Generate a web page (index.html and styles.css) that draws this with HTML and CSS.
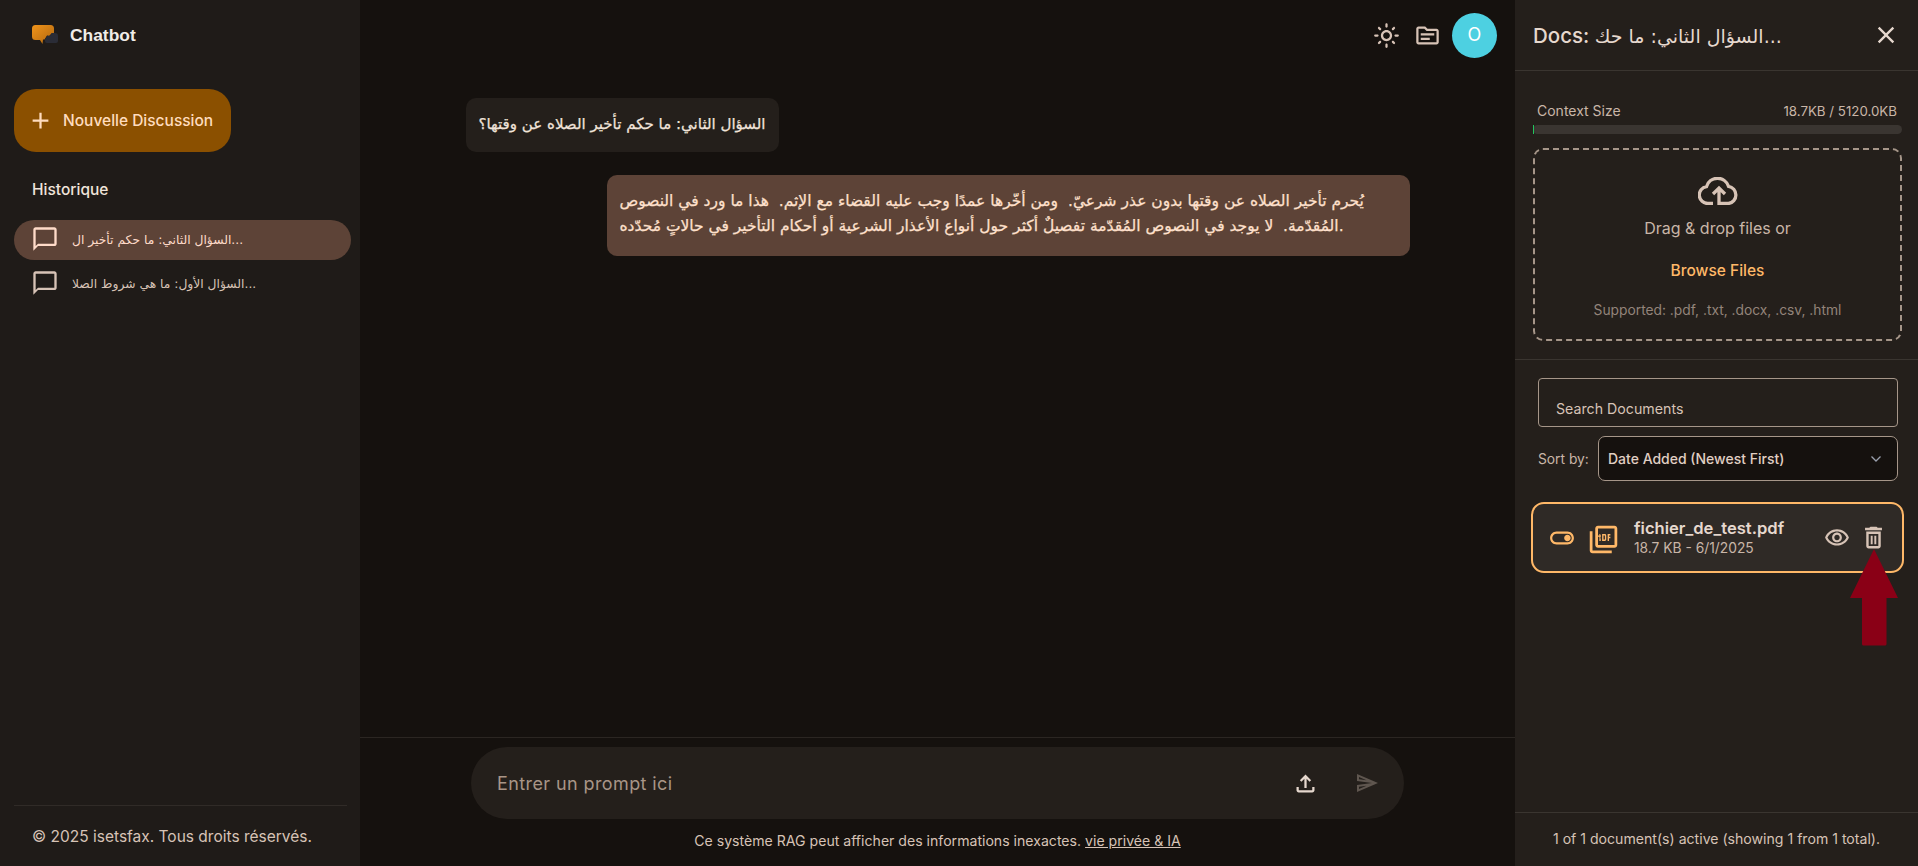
FILE: index.html
```html
<!DOCTYPE html>
<html lang="fr">

<head>
    <meta charset="UTF-8">
    <title>Chatbot</title>
    <link rel="stylesheet" href="styles.css">
</head>

<body>
    <!-- sidebar -->
    <aside class="sidebar">
        <div class="brand">
            <svg class="brand-logo" viewBox="0 0 26 20" width="26" height="20">
                <defs>
                    <linearGradient id="logoGrad" x1="0" y1="0" x2="1" y2="1">
                        <stop offset="0" stop-color="#f0941a" />
                        <stop offset="1" stop-color="#b0660f" />
                    </linearGradient>
                </defs>
                <path d="M3.500 0h15A3.500 3.500 0 0 1 22 3.500V8l-3 1-2 2-2-.5-2.500 4H11L10.500 19 8 15H3.500A3.500 3.500 0 0 1 0 11.500v-8A3.500 3.500 0 0 1 3.500 0z" fill="url(#logoGrad)" />
                <path d="M19 8h4a3 3 0 0 1 3 3v5a2 2 0 0 1-2 2h-9a2 2 0 0 1-2-2v-1.500l2.500-4 2 .5 2-2z" fill="#2a2c36" />
            </svg>
            <span class="brand-name">Chatbot</span>
        </div>
        <button class="new-chat">
            <svg class="icon-27" viewBox="0 0 24 24"><path d="M19 13h-6v6h-2v-6H5v-2h6V5h2v6h6v2z" /></svg>
            <span>Nouvelle Discussion</span>
        </button>
        <div class="history-title">Historique</div>
        <ul class="history">
            <li class="history-item active">
                <svg class="icon-28" viewBox="0 0 24 24"><path d="M20 2H4c-1.100 0-2 .9-2 2v18l4-4h14c1.100 0 2-.9 2-2V4c0-1.100-.9-2-2-2zm0 14H6l-2 2V4h16v12z" /></svg>
                <span class="ar">السؤال الثاني: ما حكم تأخير ال...</span>
            </li>
            <li class="history-item">
                <svg class="icon-28" viewBox="0 0 24 24"><path d="M20 2H4c-1.100 0-2 .9-2 2v18l4-4h14c1.100 0 2-.9 2-2V4c0-1.100-.9-2-2-2zm0 14H6l-2 2V4h16v12z" /></svg>
                <span class="ar">السؤال الأول: ما هي شروط الصلا...</span>
            </li>
        </ul>
        <div class="copyright">© 2025 isetsfax. Tous droits réservés.</div>
    </aside>

    <!-- conversation -->
    <main class="main">
        <div class="topbar">
            <svg class="icon-27" viewBox="0 0 24 24"><path d="M12 9c1.650 0 3 1.350 3 3s-1.350 3-3 3-3-1.350-3-3 1.350-3 3-3m0-2c-2.760 0-5 2.240-5 5s2.240 5 5 5 5-2.240 5-5-2.240-5-5-5zM2 13h2c.55 0 1-.45 1-1s-.45-1-1-1H2c-.55 0-1 .45-1 1s.45 1 1 1zm18 0h2c.55 0 1-.45 1-1s-.45-1-1-1h-2c-.55 0-1 .45-1 1s.45 1 1 1zM11 2v2c0 .55.45 1 1 1s1-.45 1-1V2c0-.55-.45-1-1-1s-1 .45-1 1zm0 18v2c0 .55.45 1 1 1s1-.45 1-1v-2c0-.55-.45-1-1-1s-1 .45-1 1zM5.990 4.580c-.39-.39-1.030-.39-1.410 0-.39.39-.39 1.030 0 1.410l1.060 1.060c.39.39 1.030.39 1.410 0s.39-1.030 0-1.410L5.990 4.580zm12.370 12.370c-.39-.39-1.030-.39-1.410 0-.39.39-.39 1.030 0 1.410l1.060 1.060c.39.39 1.030.39 1.410 0 .39-.39.39-1.030 0-1.410l-1.060-1.060zm1.060-10.960c.39-.39.39-1.030 0-1.410-.39-.39-1.030-.39-1.410 0l-1.060 1.060c-.39.39-.39 1.030 0 1.410s1.030.39 1.410 0l1.060-1.060zM7.050 18.360c.39-.39.39-1.030 0-1.410-.39-.39-1.030-.39-1.410 0l-1.060 1.060c-.39.39-.39 1.030 0 1.410s1.030.39 1.410 0l1.060-1.060z" /></svg>
            <svg class="icon-27" viewBox="0 0 24 24"><path d="M20 6h-8l-2-2H4c-1.100 0-1.990.9-1.990 2L2 18c0 1.100.9 2 2 2h16c1.100 0 2-.9 2-2V8c0-1.100-.9-2-2-2zm0 12H4V6h5.170l2 2H20v10zm-14-4h8v2H6zm0-4h12v2H6z" /></svg>
            <div class="avatar">O</div>
        </div>

        <div class="messages">
            <div class="bubble bubble-user ar">السؤال الثاني: ما حكم تأخير الصلاه عن وقتها؟</div>
            <div class="bubble bubble-bot ar">يُحرم تأخير الصلاه عن وقتها بدون عذر شرعيّ.  ومن أخّرها عمدًا وجب عليه القضاء مع الإثم.  هذا ما ورد في النصوص<br>المُقدّمة.  لا يوجد في النصوص المُقدّمة تفصيلٌ أكثر حول أنواع الأعذار الشرعية أو أحكام التأخير في حالاتٍ مُحدّده.</div>
        </div>

        <div class="composer">
            <div class="prompt">
                <input class="prompt-input" type="text" placeholder="Entrer un prompt ici">
                <svg class="icon-27 prompt-upload" viewBox="0 0 24 24"><path d="M18 15v3H6v-3H4v3c0 1.100.9 2 2 2h12c1.100 0 2-.9 2-2v-3h-2zM7 9l1.410 1.410L11 7.830V16h2V7.830l2.590 2.580L17 9l-5-5-5 5z" /></svg>
                <svg class="icon-24 prompt-send" viewBox="0 0 24 24"><path d="M4.010 6.030l7.510 3.220-7.520-1 .01-2.220m7.500 8.720L4 17.970v-2.220l7.510-1M2.010 3L2 10l15 2-15 2 .01 7L23 12 2.010 3z" /></svg>
            </div>
            <p class="disclaimer">Ce système RAG peut afficher des informations inexactes. <a href="#">vie privée &amp; IA</a></p>
        </div>
    </main>

    <!-- documents panel -->
    <section class="panel">
        <header class="panel-head">
            <h2 class="panel-title">Docs: <span class="ar">السؤال الثاني: ما حك...</span></h2>
            <svg class="icon-28" viewBox="0 0 24 24"><path d="M19 6.410 17.590 5 12 10.590 6.410 5 5 6.410 10.590 12 5 17.590 6.410 19 12 13.410 17.590 19 19 17.590 13.410 12z" /></svg>
        </header>

        <div class="panel-upload">
            <div class="context-row">
                <span>Context Size</span>
                <span class="context-value">18.7KB / 5120.0KB</span>
            </div>
            <div class="context-bar"><div class="context-fill" style="width: 0.37%"></div></div>
            <div class="dropzone">
                <svg class="icon-cloud" viewBox="0 0 40 28" width="40" height="28">
                    <path d="M15 26.500H10A8.500 8.500 0 0 1 8.500 9.600 A11.500 11.500 0 0 1 30.500 9.300 A8.700 8.700 0 0 1 30.500 26.500H21" />
                    <path d="M21 28V11M15 17l6-6 6 6" />
                </svg>
                <div class="drop-text">Drag &amp; drop files or</div>
                <div class="drop-browse">Browse Files</div>
                <div class="drop-hint">Supported: .pdf, .txt, .docx, .csv, .html</div>
            </div>
        </div>

        <div class="panel-docs">
            <input class="doc-search" type="text" placeholder="Search Documents">
            <div class="sort-row">
                <span class="sort-label">Sort by:</span>
                <div class="sort-select">
                    <span>Date Added (Newest First)</span>
                    <svg class="chevron" viewBox="0 0 12 8" width="12" height="8"><path d="M1.500 1.500 6 6l4.500-4.500" /></svg>
                </div>
            </div>
            <div class="doc-card">
                <svg class="icon-toggle orange" viewBox="0 0 24 24"><path d="M17 6H7c-3.310 0-6 2.690-6 6s2.690 6 6 6h10c3.310 0 6-2.690 6-6s-2.690-6-6-6zm0 10H7c-2.210 0-4-1.790-4-4s1.790-4 4-4h10c2.210 0 4 1.790 4 4s-1.790 4-4 4zm0-7c-1.660 0-3 1.340-3 3s1.340 3 3 3 3-1.340 3-3-1.340-3-3-3z" /></svg>
                <svg class="icon-pdf orange" viewBox="0 0 24 24"><path d="M20 2H8c-1.100 0-2 .9-2 2v12c0 1.100.9 2 2 2h12c1.100 0 2-.9 2-2V4c0-1.100-.9-2-2-2zm0 14H8V4h12v12zM4 6H2v14c0 1.100.9 2 2 2h14v-2H4V6zm10 6v-3c0-.55-.45-1-1-1h-2v5h2c.55 0 1-.45 1-1zm-2-3h1v3h-1V9zm4 2h1v-1h-1V9h1V8h-2v5h1zm-8 0h1c.55 0 1-.45 1-1V9c0-.55-.45-1-1-1H9v5h1v-2zm0-2h1v1h-1V9z" /></svg>
                <div class="doc-info">
                    <div class="doc-name">fichier_de_test.pdf</div>
                    <div class="doc-meta">18.7 KB - 6/1/2025</div>
                </div>
                <svg class="icon-eye" viewBox="0 0 24 24"><path d="M12 6c3.790 0 7.170 2.130 8.820 5.500C19.170 14.870 15.790 17 12 17s-7.170-2.130-8.820-5.500C4.830 8.130 8.210 6 12 6m0-2C7 4 2.730 7.110 1 11.500 2.730 15.890 7 19 12 19s9.270-3.110 11-7.500C21.270 7.110 17 4 12 4zm0 5c1.380 0 2.500 1.120 2.500 2.500S13.380 14 12 14s-2.500-1.120-2.500-2.500S10.620 9 12 9m0-2c-2.480 0-4.500 2.020-4.500 4.500S9.520 16 12 16s4.500-2.020 4.500-4.500S14.480 7 12 7z" /></svg>
                <svg class="icon-trash" viewBox="0 0 24 24"><path d="M6 19c0 1.100.9 2 2 2h8c1.100 0 2-.9 2-2V7H6v12zM8 9h8v10H8V9zm7.500-5-1-1h-5l-1 1H5v2h14V4h-3.500zM9.700 10.500h1.600v7H9.700zM12.700 10.500h1.600v7h-1.600z" /></svg>
            </div>
        </div>

        <footer class="panel-foot">1 of 1 document(s) active (showing 1 from 1 total).</footer>

        <!-- annotation arrow over the delete button -->
        <svg class="arrow" viewBox="0 0 50 97" width="50" height="97">
            <path d="M25 0 49 49H37.500V95a1.500 1.500 0 0 1-1.500 1.500H14.500a1.500 1.500 0 0 1-1.500-1.500V49H1z" />
        </svg>
    </section>
</body>

</html>
```

FILE: styles.css
```css
* {
    box-sizing: border-box;
}

html,
body {
    height: 100%;
}

body {
    margin: 0;
    display: flex;
    overflow: hidden;
    font-family: Inter, "Noto Sans", sans-serif;
    color: #e6d8ce;
    background-color: #15110e;
}

svg {
    flex: none;
    fill: currentColor;
}

.icon-24 {
    width: 24px;
    height: 24px;
}

.icon-27 {
    width: 27px;
    height: 27px;
}

.icon-28 {
    width: 28px;
    height: 28px;
}

.orange {
    color: #ffb868;
}

.ar {
    font-family: "DejaVu Sans", sans-serif;
}

/* sidebar */
.sidebar {
    width: 360px;
    flex: none;
    display: flex;
    flex-direction: column;
    padding: 25px 9px 0 14px;
    background-color: #1f1b18;
}

.brand {
    display: flex;
    align-items: center;
    gap: 12px;
    height: 20px;
    padding-left: 18px;
}

.brand-name {
    font-family: "Liberation Sans", sans-serif;
    font-size: 17.400px;
    font-weight: 700;
    color: #f1ede8;
}

.new-chat {
    display: flex;
    align-items: center;
    gap: 9px;
    width: 217px;
    height: 63px;
    margin-top: 44px;
    padding: 0 0 0 13px;
    border: none;
    border-radius: 22px;
    font-family: inherit;
    font-size: 15.500px;
    font-weight: 500;
    color: #ffdcbe;
    background-color: #8b5000;
}

.history-title {
    margin: 27px 0 0 18px;
    font-size: 15.500px;
    font-weight: 500;
    line-height: 22px;
    color: #f0e4da;
}

.history {
    list-style: none;
    margin: 19px 0 0;
    padding: 0;
}

.history-item {
    display: flex;
    align-items: center;
    gap: 13px;
    height: 40px;
    margin-bottom: 4px;
    padding-left: 17px;
    border-radius: 20px;
    font-size: 12.300px;
    color: #d7c3b6;
}

.history-item svg {
    margin-top: -3px;
}

.history-item.active {
    color: #ffdbc9;
    background-color: #5d4337;
}

.copyright {
    margin: auto 4px 0 0;
    height: 61px;
    padding: 21px 0 0 18px;
    border-top: 1px solid #302b27;
    font-size: 15.500px;
    line-height: 20px;
    color: #d7c3b6;
}

/* conversation */
.main {
    flex: 1;
    min-width: 0;
    display: flex;
    flex-direction: column;
}

.topbar {
    display: flex;
    justify-content: flex-end;
    align-items: center;
    gap: 14px;
    height: 70px;
    padding: 0 18px 0 0;
    color: #d7c3b6;
}

.avatar {
    width: 45px;
    height: 45px;
    margin-left: -3px;
    border-radius: 50%;
    font-size: 18px;
    line-height: 43px;
    text-align: center;
    color: #fff;
    background-color: #4dd0e1;
}

.messages {
    flex: 1;
    display: flex;
    flex-direction: column;
    align-items: flex-start;
    gap: 23px;
    width: 944px;
    margin: 0 auto;
    padding-top: 28px;
}

.bubble {
    padding: 14px 13px;
    border-radius: 10px;
    line-height: 25px;
    -webkit-text-stroke: 0.25px currentColor;
}

.bubble-user {
    height: 54px;
    font-size: 15.050px;
    color: #f1e4da;
    background-color: #241f1b;
}

.bubble-bot {
    align-self: flex-end;
    width: 803px;
    height: 81px;
    font-size: 15.500px;
    white-space: pre-wrap;
    color: #ffe0cc;
    background-color: #5d4337;
}

.composer {
    height: 129px;
    padding-top: 9px;
    border-top: 1px solid #2b2622;
}

.prompt {
    display: flex;
    align-items: center;
    width: 933px;
    height: 72px;
    margin: 0 auto;
    padding: 0 25px 0 26px;
    border-radius: 36px;
    background-color: #241f1b;
}

.prompt-input {
    flex: 1;
    min-width: 0;
    border: none;
    outline: none;
    padding: 0;
    font-family: inherit;
    font-size: 18px;
    letter-spacing: 0.4px;
    background: none;
}

.prompt-input::placeholder {
    color: #a89587;
}

.prompt-upload {
    color: #e6d8ce;
}

.prompt-send {
    margin-left: 36px;
    color: #5f564f;
}

.disclaimer {
    margin: 12px 0 0;
    font-size: 14.100px;
    line-height: 20px;
    text-align: center;
    color: #d7c3b6;
}

.disclaimer a {
    color: inherit;
}

/* documents panel */
.panel {
    position: relative;
    width: 403px;
    flex: none;
    display: flex;
    flex-direction: column;
    background-color: #241f1b;
}

.panel-head {
    display: flex;
    justify-content: space-between;
    align-items: center;
    height: 71px;
    padding: 0 18px;
    border-bottom: 1px solid #3a3530;
    color: #e6d8ce;
}

.panel-title {
    margin: 0;
    font-size: 20.500px;
    font-weight: 500;
    white-space: nowrap;
}

.panel-title .ar {
    font-size: 19px;
    font-weight: 400;
}

.panel-upload {
    height: 289px;
    padding: 30px 16px 0 18px;
    border-bottom: 1px solid #3a3530;
}

.context-row {
    display: flex;
    justify-content: space-between;
    padding: 0 5px 0 4px;
    font-size: 14px;
    line-height: 20px;
    color: #c9b6a8;
}

.context-value {
    font-size: 13.300px;
}

.context-bar {
    height: 9px;
    margin-top: 4px;
    border-radius: 5px;
    background-color: #3a3531;
}

.context-fill {
    height: 100%;
    background-color: #22c55e;
}

.dropzone {
    display: flex;
    flex-direction: column;
    align-items: center;
    height: 193px;
    margin-top: 14px;
    padding-top: 27px;
    border: 2px dashed #a69689;
    border-radius: 10px;
    color: #c9b6a8;
}

.icon-cloud {
    fill: none;
    stroke: #d7c3b6;
    stroke-width: 3.300;
}

.drop-text {
    margin-top: 11px;
    font-size: 16px;
    line-height: 24px;
}

.drop-browse {
    margin-top: 19px;
    font-size: 15.500px;
    font-weight: 500;
    line-height: 24px;
    color: #ffb868;
}

.drop-hint {
    margin-top: 17px;
    font-size: 13.800px;
    line-height: 20px;
    color: #93847a;
}

.panel-docs {
    flex: 1;
    padding: 18px 20px 0 16px;
}

.doc-search {
    display: block;
    width: 360px;
    height: 49px;
    margin-left: 7px;
    padding: 11px 17px 0;
    border: 1px solid #a69689;
    border-radius: 4px;
    outline: none;
    font-family: inherit;
    font-size: 14.200px;
    background: none;
}

.doc-search::placeholder {
    color: #d7c3b6;
}

.sort-row {
    display: flex;
    align-items: center;
    gap: 9px;
    margin: 9px 0 0 7px;
    width: 360px;
}

.sort-label {
    width: 51px;
    flex: none;
    font-size: 13.800px;
    color: #c9b6a8;
    white-space: nowrap;
}

.sort-select {
    flex: 1;
    display: flex;
    justify-content: space-between;
    align-items: center;
    height: 45px;
    padding: 0 15px 0 9px;
    border: 1px solid #a69689;
    border-radius: 7px;
    font-size: 14px;
    font-weight: 500;
    color: #e0cfc3;
    background-color: #15110e;
}

.chevron {
    fill: none;
    stroke: #9aa0ad;
    stroke-width: 1.300;
}

.doc-card {
    display: flex;
    align-items: center;
    width: 373px;
    height: 71px;
    margin-top: 21px;
    padding: 0 14px 0 16px;
    border: 2px solid #ffb868;
    border-radius: 13px;
    color: #d7c3b6;
    background-color: #2f2a26;
}

.icon-toggle {
    width: 26px;
    height: 26px;
}

.icon-pdf {
    width: 33px;
    height: 33px;
    margin: 4px 0 0 12px;
}

.icon-eye {
    width: 26px;
    height: 26px;
}

.icon-trash {
    width: 29px;
    height: 29px;
    margin-left: 9px;
}

.doc-info {
    flex: 1;
    margin-left: 14px;
}

.doc-name {
    font-size: 16.600px;
    font-weight: 600;
    line-height: 20px;
    color: #e6d8ce;
}

.doc-meta {
    font-size: 13.800px;
    line-height: 20px;
    color: #c9b6a8;
}

.panel-foot {
    height: 54px;
    border-top: 1px solid #3a3530;
    font-size: 14.100px;
    line-height: 52px;
    text-align: center;
    color: #d7c3b6;
}

.arrow {
    position: absolute;
    left: 334px;
    top: 549px;
    fill: #8a0016;
}
```
